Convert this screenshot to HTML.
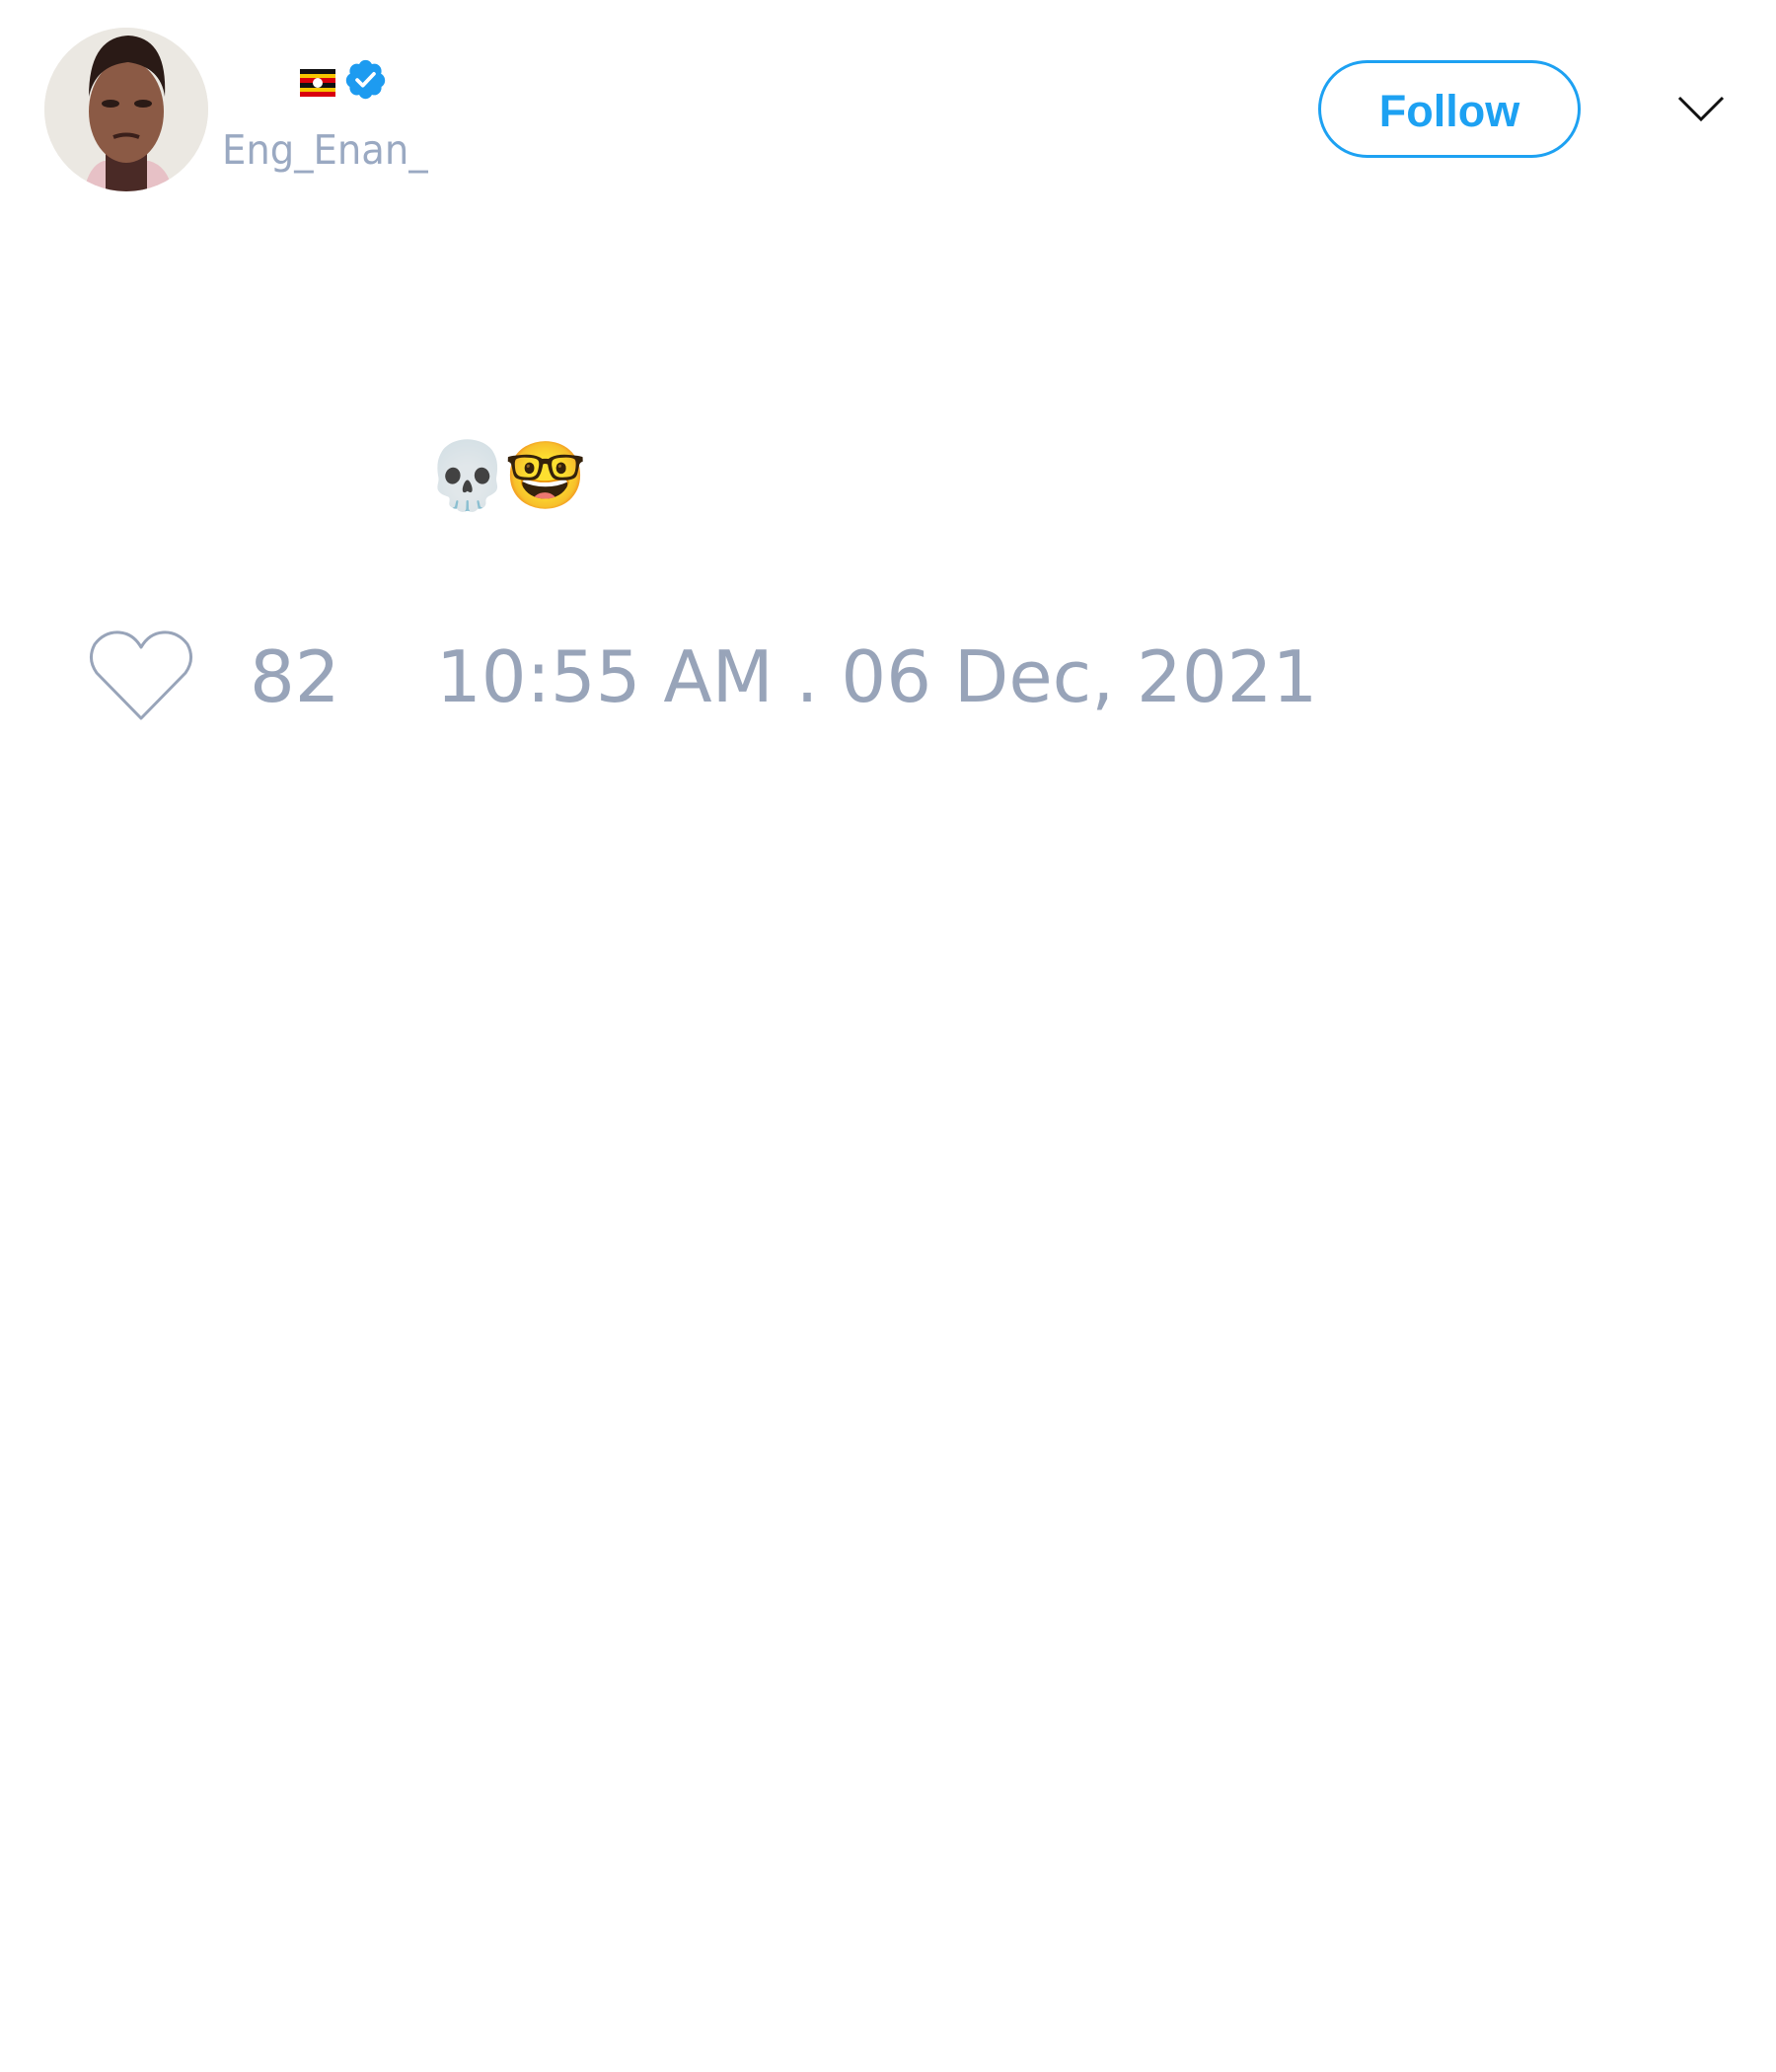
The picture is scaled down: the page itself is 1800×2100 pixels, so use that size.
<!DOCTYPE html>
<html><head><meta charset="utf-8"><style>
html,body{margin:0;padding:0;background:#fff;width:1800px;height:2100px;overflow:hidden;position:relative;font-family:"DejaVu Sans","Liberation Sans",sans-serif}
.abs{position:absolute}
.av{left:45px;top:28px;width:166px;height:166px;border-radius:50%;overflow:hidden;background:#ece9e4}
.user{left:225px;top:132px;font-size:41px;color:#9aa9c2;line-height:1;transform:scaleX(0.94);transform-origin:left}
.btn{left:1336px;top:61px;width:260px;height:93px;border:3px solid #1da1f2;border-radius:50px;box-sizing:content-box}
.btn span{position:absolute;left:0;right:0;top:26px;text-align:center;font:bold 45px "Liberation Sans",Arial,sans-serif;color:#1da1f2;line-height:1}
.meta{font-size:72px;color:#98a4b9;line-height:1;top:650px}
</style></head><body>
<div class="abs av">
<svg width="166" height="166" viewBox="0 0 166 166">
<rect width="166" height="166" fill="#ebe8e2"/>
<path d="M40 166 Q45 140 60 135 L106 135 Q125 140 130 166Z" fill="#e7c1c6"/>
<path d="M62 166 L62 128 L104 128 L104 166Z" fill="#4a2a26"/>
<ellipse cx="83" cy="85" rx="38" ry="52" fill="#8b5a45"/>
<path d="M45 70 Q45 10 85 8 Q125 10 122 70 Q118 40 85 35 Q52 38 45 70Z" fill="#2a1a16"/>
<ellipse cx="67" cy="77" rx="9" ry="4" fill="#2a1a16"/>
<ellipse cx="100" cy="77" rx="9" ry="4" fill="#2a1a16"/>
<path d="M70 111 Q83 106 96 111" stroke="#3a1f1a" stroke-width="4" fill="none"/>
</svg>
</div>
<div class="abs" style="left:304px;top:70px;width:36px;height:28px">
<svg width="36" height="28" viewBox="0 0 36 28">
<rect y="0" width="36" height="5" fill="#111"/><rect y="5" width="36" height="4" fill="#f7c600"/><rect y="9" width="36" height="5" fill="#d9000d"/>
<rect y="14" width="36" height="5" fill="#111"/><rect y="19" width="36" height="4" fill="#f7c600"/><rect y="23" width="36" height="5" fill="#d9000d"/>
<circle cx="18" cy="14" r="5" fill="#fff"/></svg></div>
<div class="abs" style="left:348px;top:58px;width:45px;height:45px">
<svg width="45" height="45" viewBox="0 0 24 24"><path fill="#1d9bf0" d="M22.5 12.5c0-1.58-.875-2.950-2.148-3.6.154-.435.238-.905.238-1.4 0-2.210-1.710-3.998-3.818-3.998-.470 0-.920.084-1.336.250C14.818 2.415 13.510 1.500 12 1.500s-2.816.917-3.437 2.250c-.415-.165-.866-.250-1.336-.250-2.110 0-3.818 1.790-3.818 4 0 .494.083.964.237 1.400-1.272.650-2.147 2.018-2.147 3.600 0 1.495.782 2.798 1.942 3.486-.020.170-.032.340-.032.514 0 2.210 1.708 4 3.818 4 .470 0 .920-.086 1.335-.250.620 1.334 1.926 2.250 3.437 2.250 1.512 0 2.818-.916 3.437-2.250.415.163.865.248 1.336.248 2.110 0 3.818-1.790 3.818-4 0-.174-.012-.344-.033-.513 1.158-.687 1.943-1.990 1.943-3.484z"/><path d="M7.5 12.3l3 3 6-6.3" stroke="#fff" stroke-width="2" fill="none" stroke-linecap="round" stroke-linejoin="round"/></svg></div>
<div class="abs user">Eng_Enan_</div>
<div class="abs btn"><span>Follow</span></div>
<svg class="abs" style="left:1700px;top:96px" width="48" height="30" viewBox="0 0 48 30"><path d="M2 3 L24 25 L46 3" stroke="#111" stroke-width="3" fill="none"/></svg>
<div class="abs" style="left:432px;top:450px;font-size:67px;line-height:1;font-family:'Noto Color Emoji',sans-serif;letter-spacing:-4px">💀🤓</div>
<svg class="abs" style="left:90px;top:638px" width="106" height="94" viewBox="0 0 106 94"><path d="M53 90 L8 44 Q-2 30 6 15 Q16 2 31 3 Q45 4 53 18 Q61 4 75 3 Q90 2 100 15 Q108 30 98 44 Z" stroke="#98a4b9" stroke-width="3" fill="none" stroke-linejoin="round"/></svg>
<div class="abs meta" style="left:253px">82</div>
<div class="abs meta" style="left:442px;white-space:nowrap">10:55 AM . 06 Dec, 2021</div>
</body></html>
